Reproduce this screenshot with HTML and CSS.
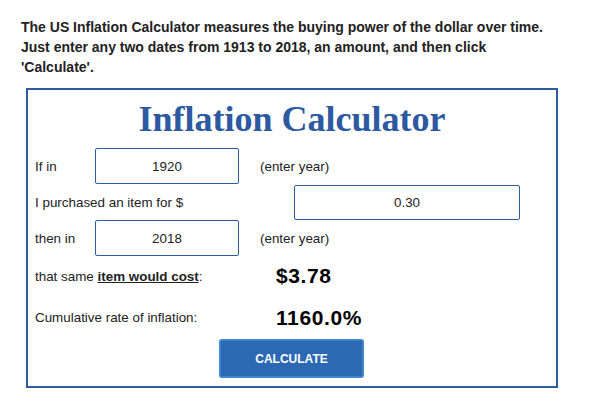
FILE: index.html
```html
<!DOCTYPE html>
<html>
<head>
<meta charset="utf-8">
<link rel="stylesheet" href="styles.css">
</head>
<body>
<div class="page">
  <p class="intro">The US Inflation Calculator measures the buying power of the dollar over time. Just enter any two dates from 1913 to 2018, an amount, and then click 'Calculate'.</p>
  <div class="calc">
    <h1 class="title">Inflation Calculator</h1>
    <div class="row">
      <span class="label">If in</span>
      <div class="field year">1920</div>
      <span class="hint">(enter year)</span>
    </div>
    <div class="row">
      <span class="label wide">I purchased an item for $</span>
      <div class="field amount">0.30</div>
    </div>
    <div class="row">
      <span class="label">then in</span>
      <div class="field year">2018</div>
      <span class="hint">(enter year)</span>
    </div>
    <div class="result r1">
      <span class="rlabel">that same <b class="u">item would cost</b>:</span>
      <span class="rvalue">$3.78</span>
    </div>
    <div class="result r2">
      <span class="rlabel">Cumulative rate of inflation:</span>
      <span class="rvalue">1160.0%</span>
    </div>
    <div class="actions">
      <button class="btn">CALCULATE</button>
    </div>
  </div>
</div>
</body>
</html>
```
FILE: styles.css
```css
* { box-sizing: border-box; }
html, body { margin: 0; padding: 0; background: #fff; }
body { font-family: "Liberation Sans", Arial, sans-serif; color: #222; }
.page { padding: 17px 0 0 21px; width: 580px; }
.intro {
  margin: 0 0 11px 0;
  font-size: 14px;
  font-weight: bold;
  line-height: 20px;
  color: #222;
  width: 540px;
}
.calc {
  margin-left: 5px;
  width: 532px;
  border: 2px solid #2d5d9c;
  padding: 0 36px 8px 7px;
}
.title {
  margin: 0 -36px 0 -7px;
  font-family: "Liberation Serif", "Times New Roman", serif;
  font-size: 36px;
  font-weight: bold;
  color: #2c59a0;
  text-align: center;
  line-height: 58px;
}
.row {
  display: flex;
  align-items: center;
  height: 36px;
  font-size: 13.4px;
}
.label { width: 60px; }
.label.wide { flex: 1; }
.field {
  height: 36px;
  border: 1px solid #2d5d9c;
  border-radius: 2px;
  display: flex;
  align-items: center;
  justify-content: center;
  font-size: 13.4px;
  color: #222;
}
.field.year { width: 144px; }
.field.amount { width: 226px; height: 35px; }
.hint { margin-left: 21px; }
.result {
  display: flex;
  align-items: center;
  font-size: 13.4px;
}
.r1 { height: 40px; }
.r2 { height: 43px; }
.rlabel { width: 241px; }
.u { text-decoration: underline; }
.rvalue { font-size: 21px; font-weight: bold; color: #000; letter-spacing: 0.6px; }
.actions { display: flex; padding-left: 184px; }
.btn {
  width: 145px;
  height: 39px;
  background: #2c69b2;
  border: 2px solid #3f86cc;
  border-radius: 3px;
  color: #fff;
  font-family: "Liberation Sans", Arial, sans-serif;
  font-size: 12px;
  font-weight: bold;
}
```
